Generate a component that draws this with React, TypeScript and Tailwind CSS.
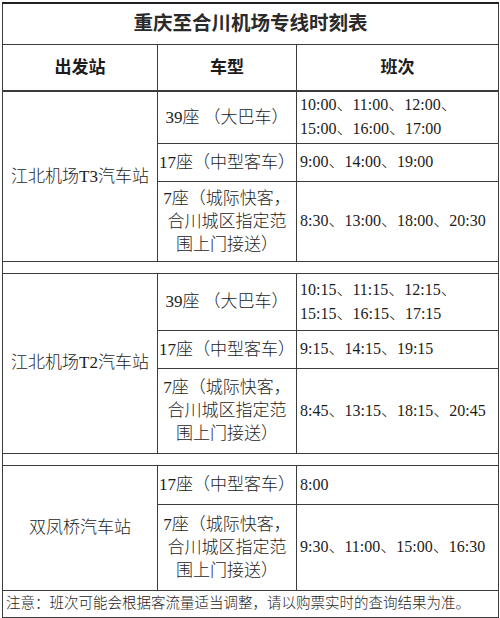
import { Fragment } from "react";

const serif = { fontFamily: '"Liberation Serif", "Noto Sans CJK SC", serif' };

type Service = { type: string[]; times: string[]; h: string };
type Station = { name: string; services: Service[] };

const stations: Station[] = [
  {
    name: "江北机场T3汽车站",
    services: [
      { type: ["39座 （大巴车）"], times: ["10:00、11:00、12:00、", "15:00、16:00、17:00"], h: "h-[52px]" },
      { type: ["17座（中型客车）"], times: ["9:00、14:00、19:00"], h: "h-[38px]" },
      { type: ["7座（城际快客，", "合川城区指定范", "围上门接送）"], times: ["8:30、13:00、18:00、20:30"], h: "h-[80px]" },
    ],
  },
  {
    name: "江北机场T2汽车站",
    services: [
      { type: ["39座 （大巴车）"], times: ["10:15、11:15、12:15、", "15:15、16:15、17:15"], h: "h-[57px]" },
      { type: ["17座（中型客车）"], times: ["9:15、14:15、19:15"], h: "h-[38px]" },
      { type: ["7座（城际快客，", "合川城区指定范", "围上门接送）"], times: ["8:45、13:15、18:15、20:45"], h: "h-[85px]" },
    ],
  },
  {
    name: "双凤桥汽车站",
    services: [
      { type: ["17座（中型客车）"], times: ["8:00"], h: "h-[39px]" },
      { type: ["7座（城际快客，", "合川城区指定范", "围上门接送）"], times: ["9:30、11:00、15:00、16:30"], h: "h-[86px]" },
    ],
  },
];

const cell = "border border-[#3c3c3c] p-0";

export default function App() {
  return (
    <div className="w-[500px] h-[618px] bg-white pt-[2px] pl-[2px] text-[#1c1c1c] font-light" style={serif}>
      <table className="w-[496px] table-fixed border-collapse border-t-2 border-t-[#222]">
        <colgroup>
          <col className="w-[155px]" />
          <col className="w-[139px]" />
          <col className="w-[202px]" />
        </colgroup>
        <tbody>
          <tr className="h-[41px]">
            <td colSpan={3} className={`${cell} text-center text-[19.5px] font-bold text-[#2a2a2a]`}>
              重庆至合川机场专线时刻表
            </td>
          </tr>
          <tr className="h-[47px]">
            <td className={`${cell} border-b-2 text-center text-[17px] font-bold`}>出发站</td>
            <td className={`${cell} border-b-2 text-center text-[17px] font-bold`}>车型</td>
            <td className={`${cell} border-b-2 text-center text-[17px] font-bold`}>班次</td>
          </tr>
          {stations.map((st, si) => (
            <Fragment key={st.name}>
              {st.services.map((sv, i) => (
                <tr key={i} className={sv.h}>
                  {i === 0 && (
                    <td rowSpan={st.services.length} className={`${cell} text-center text-[17px]`}>
                      {st.name}
                    </td>
                  )}
                  <td className={`${cell} text-center text-[17px] leading-[23px]`}>
                    {sv.type.map((t) => (
                      <div key={t} className="whitespace-nowrap">{t}</div>
                    ))}
                  </td>
                  <td className={`${cell} pl-[3px] text-[16px] leading-[24px]`}>
                    {sv.times.map((t) => (
                      <div key={t} className="whitespace-nowrap">{t}</div>
                    ))}
                  </td>
                </tr>
              ))}
              {si < stations.length - 1 && (
                <tr className="h-[12px]">
                  <td colSpan={3} className={cell}></td>
                </tr>
              )}
            </Fragment>
          ))}
          <tr className="h-[27px]">
            <td colSpan={3} className={`${cell} pl-[3px] text-[14.5px] whitespace-nowrap`}>
              注意：班次可能会根据客流量适当调整，请以购票实时的查询结果为准。
            </td>
          </tr>
        </tbody>
      </table>
    </div>
  );
}
